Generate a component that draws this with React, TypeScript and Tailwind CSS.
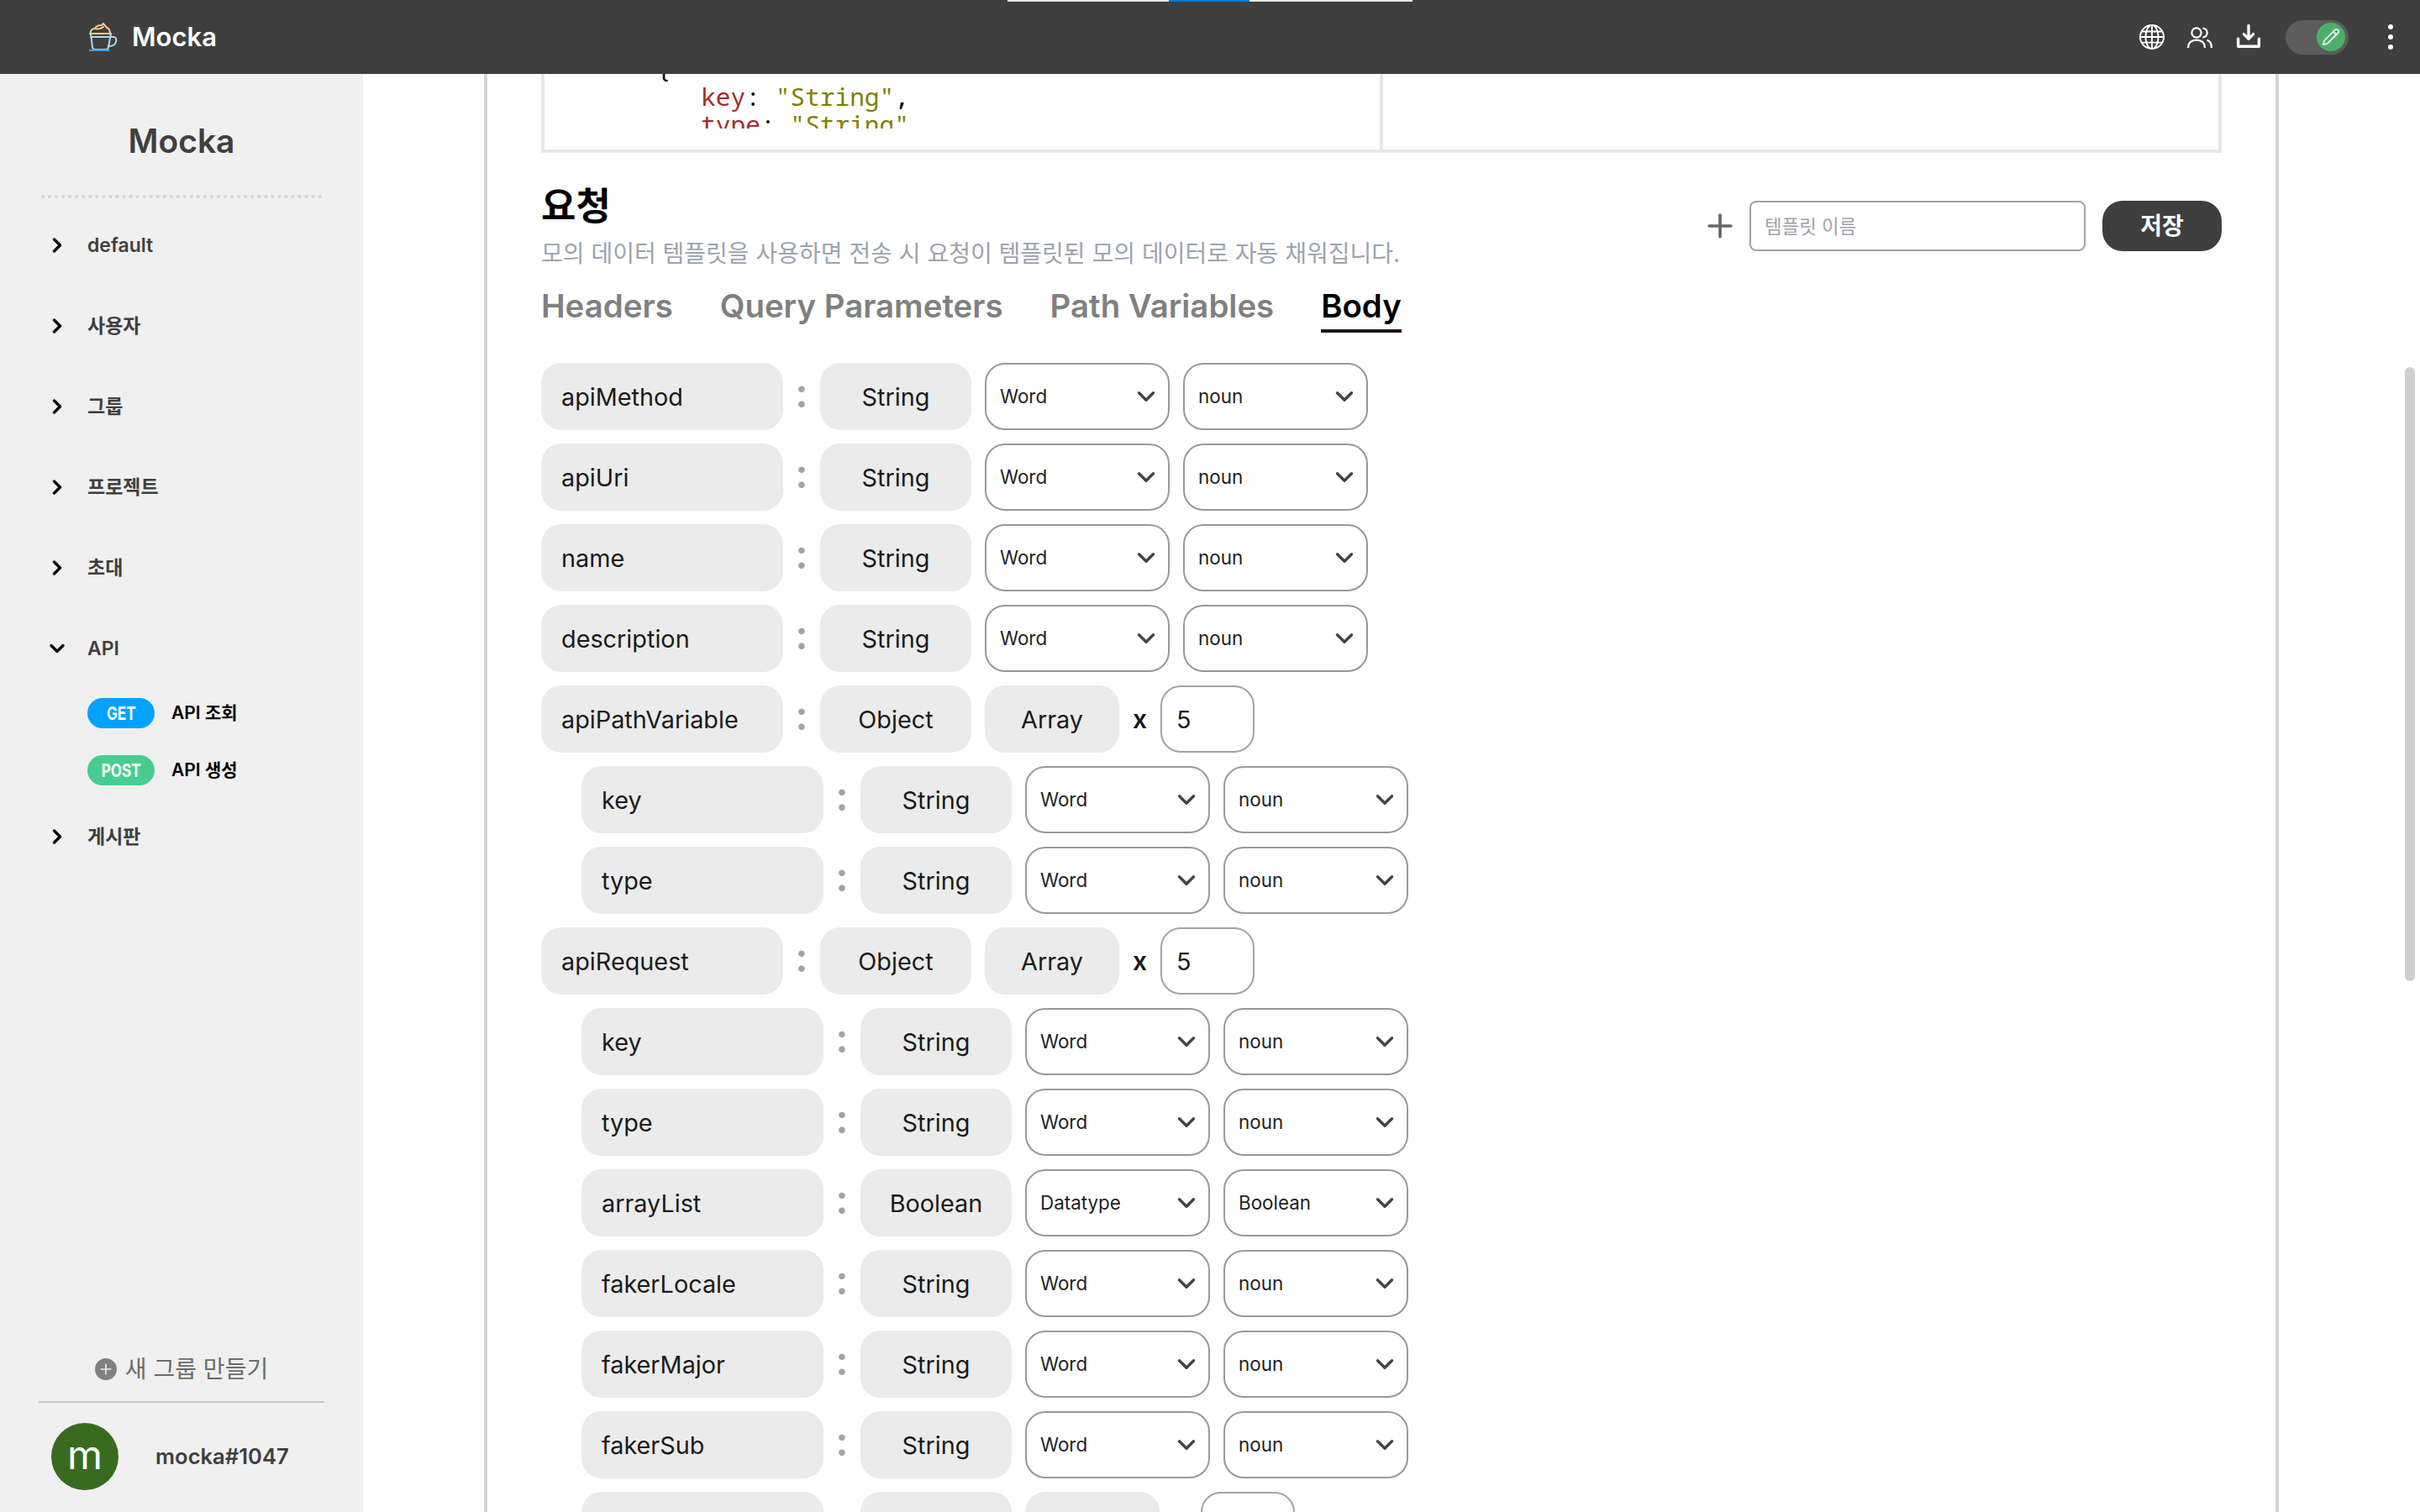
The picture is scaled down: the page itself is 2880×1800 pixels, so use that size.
import { ChevronDown, ChevronRight, Pencil, Plus } from 'lucide-react';
import { BsGlobe, BsPlusCircleFill } from 'react-icons/bs';
import { PiDownloadSimpleBold } from 'react-icons/pi';

type Row =
  | { kind: 'field'; name: string; type: string; gen: string; sub: string; child?: boolean }
  | { kind: 'object'; name: string; type: string; count: string; child?: boolean };

const field = (name: string, child = false, type = 'String', gen = 'Word', sub = 'noun'): Row => ({
  kind: 'field',
  name,
  type,
  gen,
  sub,
  child,
});

const ROWS: Row[] = [
  field('apiMethod'),
  field('apiUri'),
  field('name'),
  field('description'),
  { kind: 'object', name: 'apiPathVariable', type: 'Object', count: '5' },
  field('key', true),
  field('type', true),
  { kind: 'object', name: 'apiRequest', type: 'Object', count: '5' },
  field('key', true),
  field('type', true),
  field('arrayList', true, 'Boolean', 'Datatype', 'Boolean'),
  field('fakerLocale', true),
  field('fakerMajor', true),
  field('fakerSub', true),
  { kind: 'object', name: '', type: '', count: '', child: true },
];

const MENU = ['default', '사용자', '그룹', '프로젝트', '초대'];

function MochaLogo() {
  return (
    <svg width="34" height="34" viewBox="0 0 34 34" fill="none" strokeWidth="2" strokeLinecap="round">
      <path d="M2 13c-1-4 2-6 5-6 1-3 5-4 8-4l2-2c1 2 3 3 4 5 3 1 4 4 4 7" stroke="#f7c88f" />
      <path d="M7 7c3 1 8 0 10-2" stroke="#f7c88f" />
      <path d="M1 13h25" stroke="#f7c88f" />
      <path d="M2 17h24" stroke="#a9dcf2" />
      <path d="M2 13l2 16c0 2 2 3 3 3h13c2 0 3-1 3-3l3-16" stroke="#a9dcf2" />
      <path d="M26 17h3c3 0 4 3 3 6-1 3-4 5-8 5" stroke="#a9dcf2" />
      <path d="M1 33h22" stroke="#3ba0d0" strokeWidth="2.4" />
    </svg>
  );
}

function UsersIcon() {
  return (
    <svg width="30" height="25" viewBox="0 0 30 25" fill="none" stroke="white" strokeWidth="2.2" className="ml-[27px]">
      <circle cx="11" cy="7" r="5.6" />
      <path d="M18.5 1.5c3 .5 5.2 2.8 5.2 5.6s-2.2 5-5.2 5.6" />
      <path d="M1.2 25v-1c0-5 4-8.4 9.8-8.4s9.8 3.4 9.8 8.4v1" />
      <path d="M23.5 15.8c3.2 1 5.3 4 5.3 8.2v1" />
    </svg>
  );
}

function Sidebar() {
  return (
    <aside className="flex w-[432px] shrink-0 flex-col bg-[#f0f0f0] text-[#3f3f3f]">
      <h1 className="mt-[52px] text-center text-[39px] leading-[56px] font-semibold">Mocka</h1>
      <div className="mx-[49px] mt-[36px] border-t-4 border-dotted border-[#d1d5db]" />
      <nav className="mt-[8px] flex flex-1 flex-col text-[23px] font-semibold">
        {MENU.map((m) => (
          <div key={m} className="flex h-[96px] items-center">
            <ChevronRight size={28} strokeWidth={3} className="ml-[54px] text-black" />
            <span className="ml-[22px]">{m}</span>
          </div>
        ))}
        <div className="flex h-[96px] items-center">
          <ChevronDown size={28} strokeWidth={3} className="ml-[54px] text-black" />
          <span className="ml-[22px]">API</span>
        </div>
        <div className="mt-[11px] flex flex-col gap-[32px] pl-[104px] text-[21px] text-black">
          <div className="flex items-center">
            <span className="flex h-[36px] w-[80px] items-center justify-center rounded-full bg-[#00a2ff] text-white">
              <span className="scale-x-[.78] text-[22px] font-bold">GET</span>
            </span>
            <span className="ml-[20px]">API 조회</span>
          </div>
          <div className="flex items-center">
            <span className="flex h-[36px] w-[80px] items-center justify-center rounded-full bg-[#49cc90] text-white">
              <span className="scale-x-[.78] text-[22px] font-bold">POST</span>
            </span>
            <span className="ml-[20px]">API 생성</span>
          </div>
        </div>
        <div className="mt-[13px] flex h-[96px] items-center">
          <ChevronRight size={28} strokeWidth={3} className="ml-[54px] text-black" />
          <span className="ml-[22px]">게시판</span>
        </div>
      </nav>
      <div className="flex items-center justify-center gap-[10px] text-[28px] text-[#6b6b6b]">
        <BsPlusCircleFill size={26} className="text-[#808080]" />
        <span>새 그룹 만들기</span>
      </div>
      <div className="mx-[46px] mt-[17px] border-t-2 border-[#c8c8c8]" />
      <div className="mt-[24px] mb-[26px] flex items-center pl-[61px]">
        <div className="flex h-[80px] w-[80px] items-center justify-center rounded-full bg-[#386b1f] pb-[4px] text-[48px] leading-none text-white">
          m
        </div>
        <span className="ml-[44px] text-[25.6px] font-semibold">mocka#1047</span>
      </div>
    </aside>
  );
}

function Pill({ w, children, center }: { w: string; children?: string; center?: boolean }) {
  return (
    <div className={`flex h-[80px] shrink-0 items-center rounded-[24px] bg-[#ebebeb] pt-[1px] ${w} ${center ? 'justify-center' : 'pl-[24px]'}`}>
      {children}
    </div>
  );
}

function Select({ value }: { value: string }) {
  return (
    <div className="relative h-[80px] w-[220px] shrink-0">
      <select
        defaultValue={value}
        className="h-full w-full appearance-none rounded-[24px] border-2 border-[#999999] bg-white pl-[16px] text-[22.4px] text-[#1f1f1f]"
      >
        <option>{value}</option>
      </select>
      <ChevronDown size={34} strokeWidth={2.4} className="pointer-events-none absolute top-[23px] right-[11px] text-[#444444]" />
    </div>
  );
}

function BodyRow({ row }: { row: Row }) {
  return (
    <div className={`flex h-[80px] items-center text-[28.8px] text-[#1a1a1a] ${row.child ? 'pl-[48px]' : ''}`}>
      <Pill w="w-[288px]">{row.name}</Pill>
      <span className="w-[44px] pb-[8px] text-center text-[48px] font-semibold text-[#a3a3a3]">{row.name ? ':' : ''}</span>
      <Pill w="w-[180px]" center>
        {row.type}
      </Pill>
      {row.kind === 'field' ? (
        <div className="ml-[16px] flex gap-[16px]">
          <Select value={row.gen} />
          <Select value={row.sub} />
        </div>
      ) : (
        <>
          <div className="ml-[16px]">
            <Pill w="w-[160px]" center>
              {row.name ? 'Array' : ''}
            </Pill>
          </div>
          <span className="w-[49px] text-center text-[30px] font-semibold">{row.name ? 'x' : ''}</span>
          <div className="flex h-[80px] w-[112px] items-center rounded-[24px] border-2 border-[#a3a3a3] pt-[1px] pl-[17px]">{row.count}</div>
        </>
      )}
    </div>
  );
}

function CodeBox() {
  return (
    <div className="flex h-[94px] border-x-4 border-b-4 border-[#e5e7eb]">
      <div className="w-[998px] border-r-4 border-[#e5e7eb]">
        <pre className="mt-[-23px] h-[88px] overflow-hidden pl-[133px] font-['Noto_Sans_Mono','DejaVu_Sans_Mono',monospace] text-[29.5px] leading-[33px] text-black">
          {'{\n'}
          {'   '}
          <span className="text-[#a52a2a]">key</span>: <span className="text-[#808000]">"String"</span>,{'\n'}
          {'   '}
          <span className="text-[#a52a2a]">type</span>: <span className="text-[#808000]">"String"</span>,
        </pre>
      </div>
    </div>
  );
}

export default function App() {
  return (
    <div className="relative flex h-screen flex-col overflow-hidden bg-white font-['Inter','Noto_Sans_CJK_KR',sans-serif]">
      {/* Loading bar strip over the header */}
      <div className="absolute top-0 left-[1199px] z-10 flex h-[2px] w-[482px]">
        <div className="w-[192px] bg-[#e8e8e8]" />
        <div className="w-[96px] bg-[#0a78d0]" />
        <div className="w-[194px] bg-[#e8e8e8]" />
      </div>

      <header className="z-[5] flex h-[88px] shrink-0 items-center bg-[#3f3f3f] pl-[106px] text-white">
        <MochaLogo />
        <span className="ml-[17px] text-[31px] font-semibold">Mocka</span>
        <div className="ml-auto flex items-center">
          <BsGlobe size={30} />
          <UsersIcon />
          <PiDownloadSimpleBold size={36} className="ml-[25px]" />
          <div className="ml-[26px] flex h-[41px] w-[75px] items-center justify-end rounded-full bg-[#5c5c5c] pr-[4px]">
            <div className="flex h-[34px] w-[34px] items-center justify-center rounded-full bg-[#4caf68]">
              <Pencil size={22} className="text-[#e8f5ec]" />
            </div>
          </div>
          <div className="mr-[32px] ml-[47px] flex flex-col gap-[6px]">
            <span className="h-[6px] w-[6px] rounded-full bg-white" />
            <span className="h-[6px] w-[6px] rounded-full bg-white" />
            <span className="h-[6px] w-[6px] rounded-full bg-white" />
          </div>
        </div>
      </header>

      <div className="flex min-h-0 flex-1">
        <Sidebar />
        <main className="relative min-w-0 flex-1 overflow-hidden pl-[144px]">
          <div className="h-[1800px] w-[2136px] border-x-4 border-[#d4d4d4] px-[64px]">
            <CodeBox />

            <div className="mt-[36px] flex items-start justify-between">
              <div>
                <h2 className="text-[45px] leading-[56px] font-semibold text-black">요청</h2>
                <p className="mt-[8px] text-[28px] leading-[40px] text-[#9ca3af]">
                  모의 데이터 템플릿을 사용하면 전송 시 요청이 템플릿된 모의 데이터로 자동 채워집니다.
                </p>
                <div className="mt-[18px] flex gap-[56px] text-[38.4px] leading-[48px] font-semibold text-[#808080]">
                  <span>Headers</span>
                  <span>Query Parameters</span>
                  <span>Path Variables</span>
                  <span className="border-b-4 border-[#1a1a1a] pb-[4px] text-black">Body</span>
                </div>
              </div>
              <div className="mt-[21px] flex items-center">
                <Plus size={44} strokeWidth={2} className="text-[#666666]" />
                <input
                  placeholder="템플릿 이름"
                  className="ml-[13px] h-[60px] w-[400px] rounded-[8px] border-2 border-[#9ca3af] pl-[16px] text-[22.4px] placeholder:text-[#9ca3af]"
                />
                <button className="ml-[20px] h-[60px] w-[142px] rounded-[24px] bg-[#3f3f3f] text-[28px] font-semibold text-white">
                  저장
                </button>
              </div>
            </div>

            <div className="mt-[36px] flex flex-col gap-[16px]">
              {ROWS.map((r, i) => (
                <BodyRow key={i} row={r} />
              ))}
            </div>
          </div>

          {/* Fake scrollbar thumb */}
          <div className="absolute top-[349px] right-[6px] h-[731px] w-[12px] rounded-full bg-[#cfcfcf]" />
        </main>
      </div>
    </div>
  );
}
